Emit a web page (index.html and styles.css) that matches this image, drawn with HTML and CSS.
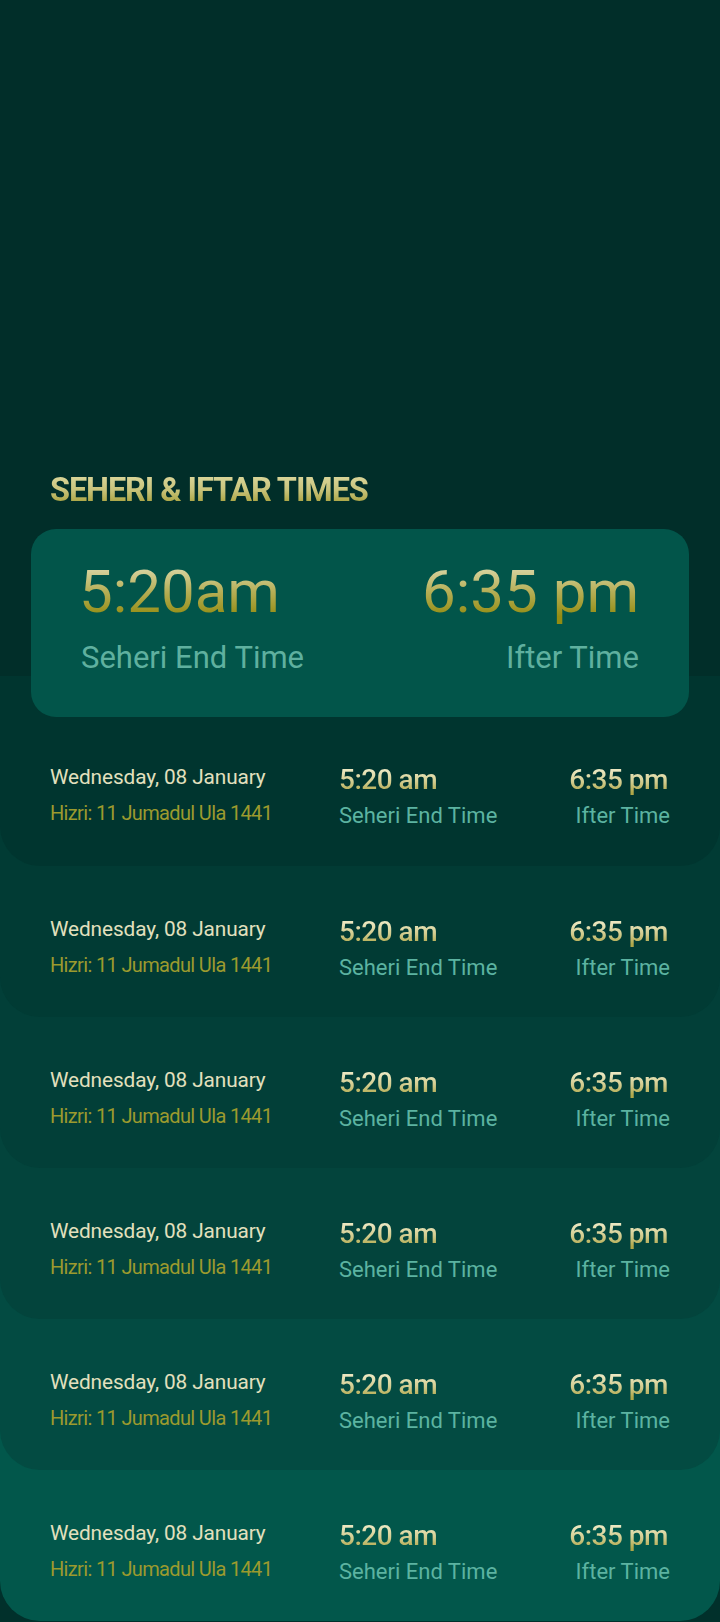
FILE: index.html
```html
<!DOCTYPE html>
<html lang="en">
<head>
<meta charset="utf-8">
<title>Seheri &amp; Iftar Times</title>
<link rel="stylesheet" href="styles.css">
</head>
<body>
<main class="screen">
  <section class="top">
    <h1 class="title"><span class="title-text">SEHERI &amp; IFTAR TIMES</span></h1>
    <div class="hero">
      <div class="hero-col">
        <span class="hero-time">5:20am</span>
        <span class="hero-label">Seheri End Time</span>
      </div>
      <div class="hero-col hero-col-right">
        <span class="hero-time">6:35 pm</span>
        <span class="hero-label">Ifter Time</span>
      </div>
    </div>
  </section>

  <ul class="list">
    <li class="row row-1">
      <div class="row-card">
        <div class="col"><span class="date">Wednesday, 08 January</span><span class="hizri">Hizri: 11 Jumadul Ula 1441</span></div>
        <div class="col"><span class="time">5:20 am</span><span class="label">Seheri End Time</span></div>
        <div class="col col-right"><span class="time">6:35 pm</span><span class="label">Ifter Time</span></div>
      </div>
    </li>
    <li class="row row-2">
      <div class="row-card">
        <div class="col"><span class="date">Wednesday, 08 January</span><span class="hizri">Hizri: 11 Jumadul Ula 1441</span></div>
        <div class="col"><span class="time">5:20 am</span><span class="label">Seheri End Time</span></div>
        <div class="col col-right"><span class="time">6:35 pm</span><span class="label">Ifter Time</span></div>
      </div>
    </li>
    <li class="row row-3">
      <div class="row-card">
        <div class="col"><span class="date">Wednesday, 08 January</span><span class="hizri">Hizri: 11 Jumadul Ula 1441</span></div>
        <div class="col"><span class="time">5:20 am</span><span class="label">Seheri End Time</span></div>
        <div class="col col-right"><span class="time">6:35 pm</span><span class="label">Ifter Time</span></div>
      </div>
    </li>
    <li class="row row-4">
      <div class="row-card">
        <div class="col"><span class="date">Wednesday, 08 January</span><span class="hizri">Hizri: 11 Jumadul Ula 1441</span></div>
        <div class="col"><span class="time">5:20 am</span><span class="label">Seheri End Time</span></div>
        <div class="col col-right"><span class="time">6:35 pm</span><span class="label">Ifter Time</span></div>
      </div>
    </li>
    <li class="row row-5">
      <div class="row-card">
        <div class="col"><span class="date">Wednesday, 08 January</span><span class="hizri">Hizri: 11 Jumadul Ula 1441</span></div>
        <div class="col"><span class="time">5:20 am</span><span class="label">Seheri End Time</span></div>
        <div class="col col-right"><span class="time">6:35 pm</span><span class="label">Ifter Time</span></div>
      </div>
    </li>
    <li class="row row-6">
      <div class="row-card">
        <div class="col"><span class="date">Wednesday, 08 January</span><span class="hizri">Hizri: 11 Jumadul Ula 1441</span></div>
        <div class="col"><span class="time">5:20 am</span><span class="label">Seheri End Time</span></div>
        <div class="col col-right"><span class="time">6:35 pm</span><span class="label">Ifter Time</span></div>
      </div>
    </li>
  </ul>
</main>
</body>
</html>
```

FILE: styles.css
```css
* {
  box-sizing: border-box;
}

html, body {
  margin: 0;
  padding: 0;
  background: #01302b;
}

.screen {
  width: 720px;
  height: 1622px;
  overflow: hidden;
  font-family: Roboto, "Liberation Sans", sans-serif;
}

/* ---------- top area ---------- */
.top {
  padding-top: 470px;
  background: linear-gradient(#012e29 0, #012e29 676px, #00352f 676px);
}

.title {
  margin: 0 0 19px 50px;
  font-family: Roboto, "Liberation Sans", sans-serif;
  font-weight: 700;
  font-size: 32.5px;
  line-height: 40px;
  letter-spacing: -1.1px;
}

.title-text {
  display: inline-block;
  background: linear-gradient(#dcd89e 10%, #c8c37a 50%, #a39c34 90%);
  -webkit-background-clip: text;
  background-clip: text;
  color: transparent;
}

.hero {
  margin: 0 31px;
  height: 188px;
  padding: 28px 50px 0 48px;
  display: flex;
  justify-content: space-between;
  background: #02554a;
  border-radius: 25px;
}

.hero-col {
  display: flex;
  flex-direction: column;
  align-items: flex-start;
}

.hero-col-right {
  align-items: flex-end;
}

.hero-time {
  display: inline-block;
  font-size: 60px;
  line-height: 70px;
  font-weight: 400;
  letter-spacing: 0;
  background: linear-gradient(#d9d5a4 15%, #b5ae55 50%, #938c12 85%);
  -webkit-background-clip: text;
  background-clip: text;
  color: transparent;
}

.hero-label {
  margin-top: 13px;
  padding-left: 2px;
  font-size: 31px;
  line-height: 36px;
  color: #5fb09f;
}

.hero-col-right .hero-label {
  padding-left: 0;
}

/* ---------- list ---------- */
.list {
  list-style: none;
  margin: 0;
  padding: 0;
}

.row-card {
  display: grid;
  grid-template-columns: 289px 1fr auto;
  align-items: start;
  padding: 50px 52px 36px 50px;
  border-radius: 0 0 40px 40px;
}

.row-1 .row-card { padding-top: 47px; padding-bottom: 37px; }

.row-1 { background: #013b34; }
.row-1 .row-card { background: #00352f; }
.row-2 { background: #023f38; }
.row-2 .row-card { background: #013b34; }
.row-3 { background: #03443c; }
.row-3 .row-card { background: #023f38; }
.row-4 { background: #034b42; }
.row-4 .row-card { background: #03443c; }
.row-5 { background: #02574b; }
.row-5 .row-card { background: #034b42; }
.row-6 { background: #01302b; }
.row-6 .row-card { background: #02574b; }

.col {
  display: flex;
  flex-direction: column;
  align-items: flex-start;
}

.col-right {
  align-items: flex-end;
}

.date {
  font-size: 20.8px;
  line-height: 26px;
  letter-spacing: -0.1px;
  color: #e2e0be;
}

.hizri {
  margin-top: 10px;
  font-size: 20px;
  line-height: 26px;
  letter-spacing: -0.65px;
  color: #9c9a2e;
}

.time {
  display: inline-block;
  font-size: 28px;
  line-height: 32px;
  font-weight: 500;
  letter-spacing: -0.5px;
  background: linear-gradient(#ebe7c0 20%, #d3cd90 55%, #aea648 90%);
  -webkit-background-clip: text;
  background-clip: text;
  color: transparent;
}

.label {
  margin-top: 7px;
  font-size: 22px;
  line-height: 26px;
  color: #5cb3a1;
}

.col-right .label {
  margin-right: -2px;
}
```
